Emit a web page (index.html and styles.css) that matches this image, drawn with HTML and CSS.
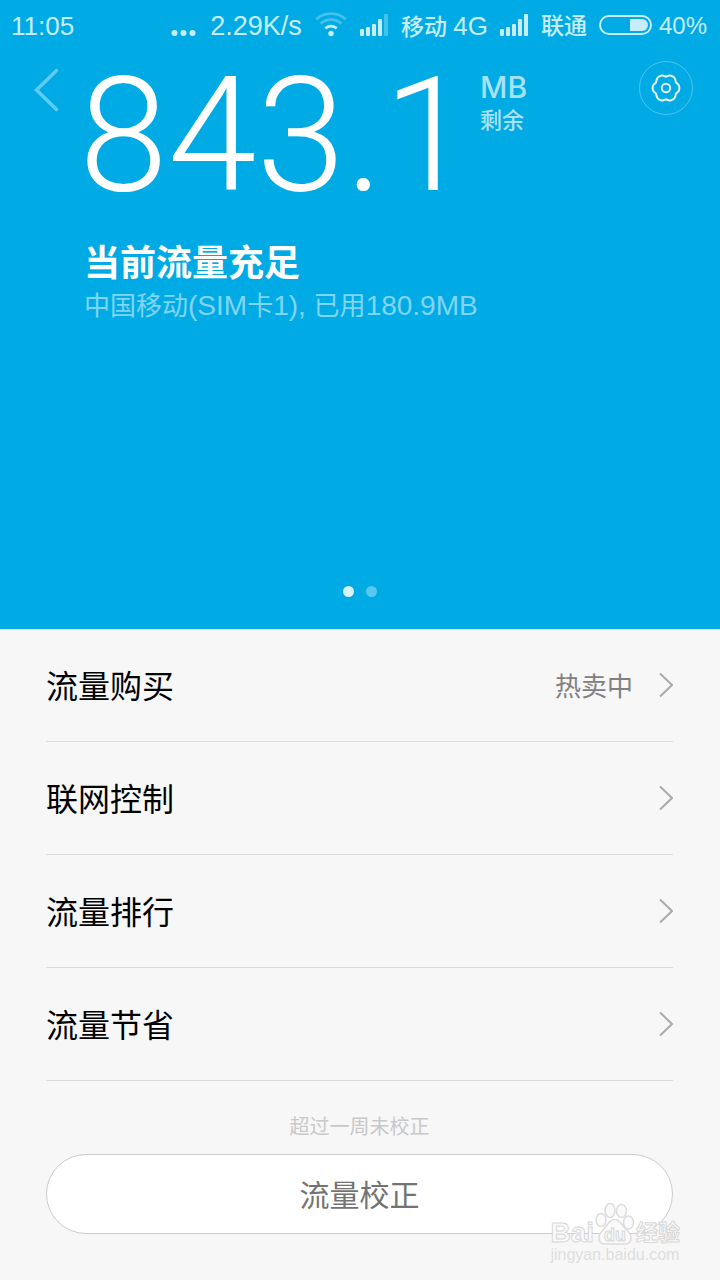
FILE: index.html
```
<!DOCTYPE html>
<html lang="zh-CN">
<head>
<meta charset="utf-8">
<meta name="viewport" content="width=device-width, initial-scale=1">
<title>流量</title>
<link rel="stylesheet" href="styles.css">
</head>
<body>
<section class="hero">
  <header class="status">
    <span class="clock">11:05</span>
    <svg class="more" width="26" height="28" viewBox="0 0 26 28"><circle cx="3.500" cy="21" r="3"/><circle cx="12.500" cy="21" r="3"/><circle cx="21.500" cy="21" r="3"/></svg>
    <span class="speed">2.29K/s</span>
    <svg class="wifi" width="32" height="28" viewBox="0 0 32 28">
      <circle cx="16" cy="21.500" r="2.700"/>
      <g fill="none" stroke="#c7edfa" stroke-width="2.800">
        <path d="M10.300 16.400a8.500 8.500 0 0 1 11.400 0"/>
        <path class="weak" d="M5.500 11.800a15.500 15.500 0 0 1 21 0"/>
        <path class="weak" d="M1.200 7.300a22 22 0 0 1 29.600 0"/>
      </g>
    </svg>
    <svg class="signal" width="28" height="28" viewBox="0 0 28 28"><rect x="0" y="17" width="4" height="7" rx="1"/><rect x="6" y="15" width="4" height="9" rx="1"/><rect x="12" y="12" width="4" height="12" rx="1"/><rect x="18" y="7" width="4" height="17" rx="1"/><rect class="weak" x="24" y="2" width="4" height="22" rx="1"/></svg>
    <span class="carrier">移动 <span class="net">4G</span></span>
    <svg class="signal" width="28" height="28" viewBox="0 0 28 28"><rect x="0" y="17" width="4" height="7" rx="1"/><rect x="6" y="15" width="4" height="9" rx="1"/><rect x="12" y="12" width="4" height="12" rx="1"/><rect x="18" y="7" width="4" height="17" rx="1"/><rect x="24" y="2" width="4" height="22" rx="1"/></svg>
    <span class="carrier">联通</span>
    <svg class="battery" width="54" height="28" viewBox="0 0 54 28"><rect x="1" y="4" width="51" height="18" rx="9" fill="none" stroke="#c7edfa" stroke-width="2"/><path d="M31 7h12a6 6 0 0 1 0 12h-12z"/></svg>
    <span class="percent">40%</span>
  </header>

  <div class="top">
    <button class="back" aria-label="返回"><svg width="26" height="44" viewBox="0 0 26 44"><path d="M22.500 2.500 2.500 22l20 19.500" fill="none" stroke="#60cbf0" stroke-width="3.500" stroke-linecap="round"/></svg></button>
    <h1 class="amount">843.1</h1>
    <div class="unit"><span class="mb">MB</span><span class="left">剩余</span></div>
    <button class="settings" aria-label="设置"><svg width="30" height="30" viewBox="-15 -15 30 30" fill="none" stroke="#e6f7fd" stroke-width="2" stroke-linecap="round">
      <defs><path id="lobe" d="M10-5.800Q10.600-4.800 11.800-4 13.400-2.800 13.400 0 13.400 2.800 11.800 4 10.600 4.800 10 5.800"/></defs>
      <use href="#lobe"/><use href="#lobe" transform="rotate(60)"/><use href="#lobe" transform="rotate(120)"/><use href="#lobe" transform="rotate(180)"/><use href="#lobe" transform="rotate(240)"/><use href="#lobe" transform="rotate(300)"/>
      <circle r="4.200"/></svg></button>
  </div>

  <h2 class="headline">当前流量充足</h2>
  <p class="detail">中国移动<span class="latin">(SIM</span>卡<span class="latin">1), </span>已用<span class="latin">180.9MB</span></p>

  <div class="dots"><span class="dot current"></span><span class="dot"></span></div>
</section>

<main class="content">
  <nav class="menu">
    <a class="row" href="#buy"><span class="name">流量购买</span><span class="note">热卖中</span><svg class="arrow" width="14" height="26" viewBox="0 0 14 26"><path d="m1 1.500 12 11.500L1 24.500"/></svg></a>
    <a class="row" href="#control"><span class="name">联网控制</span><svg class="arrow" width="14" height="26" viewBox="0 0 14 26"><path d="m1 1.500 12 11.500L1 24.500"/></svg></a>
    <a class="row" href="#rank"><span class="name">流量排行</span><svg class="arrow" width="14" height="26" viewBox="0 0 14 26"><path d="m1 1.500 12 11.500L1 24.500"/></svg></a>
    <a class="row" href="#save"><span class="name">流量节省</span><svg class="arrow" width="14" height="26" viewBox="0 0 14 26"><path d="m1 1.500 12 11.500L1 24.500"/></svg></a>
  </nav>
  <p class="hint">超过一周未校正</p>
  <button class="correct">流量校正</button>
  <div class="mark">
    <div class="brand">
      <span>Bai</span>
      <span class="paw"><svg width="42" height="44" viewBox="0 0 42 44"><g fill="#fafafa" stroke="#dcdcdc" stroke-width="1.500"><ellipse cx="7" cy="18" rx="5" ry="6.500"/><ellipse cx="16" cy="8.500" rx="5" ry="7"/><ellipse cx="27.500" cy="9" rx="5" ry="6.500"/><ellipse cx="34.500" cy="20.500" rx="5" ry="6.500"/><path d="M20.500 17.500c5 0 7 4.500 9.500 7.500s7 5.500 7 10.500c0 5-3 6.500-6 6.500H11c-4 0-6-2.500-6-6.500 0-4.500 4-7 6.500-10.500s4.500-7.500 9-7.500z"/></g></svg><span class="du">du</span></span>
      <span class="cn">经验</span>
    </div>
    <span class="site">jingyan.baidu.com</span>
  </div>
</main>
</body>
</html>
```
FILE: styles.css
```
* {
  box-sizing: border-box;
}

body {
  margin: 0;
  min-height: 100vh;
  background: #f7f7f7;
  color: #000;
  font-family: "Liberation Sans", "Noto Sans CJK SC", sans-serif;
}

h1, h2, p {
  margin: 0;
  font-weight: 400;
}

button {
  padding: 0;
  border: 0;
  background: none;
  font: inherit;
}

svg {
  display: block;
  flex: none;
}

.hero {
  display: flex;
  flex-direction: column;
  min-height: 629px;
  background: #00abe5;
  color: #fff;
}

/* Status bar */
.status {
  display: flex;
  align-items: center;
  height: 52px;
  padding: 0 13px 0 11px;
  color: #c7edfa;
  font-size: 27px;
  line-height: 28px;
  white-space: nowrap;
}

.status svg {
  fill: #c7edfa;
}

.weak {
  opacity: 0.35;
}

.clock {
  margin-right: auto;
  font-size: 26px;
}

.speed {
  margin: 0 13px;
}

.wifi {
  margin-right: 13px;
}

.carrier {
  margin: 0 12px 0 13px;
  font-size: 23px;
  font-weight: 500;
}

.net {
  font-size: 26px;
  font-weight: 400;
}

.battery {
  margin-right: 6px;
}

.percent {
  font-size: 24px;
}

/* Remaining data */
.top {
  display: flex;
  align-items: flex-start;
  height: 188px;
  padding: 0 27px 0 34px;
}

.back {
  width: 45px;
  margin-top: 16px;
}

.amount {
  flex: none;
  width: 401px;
  font-family: Roboto, "Liberation Sans", sans-serif;
  font-size: 160px;
  font-weight: 280;
  line-height: 168px;
}

.unit {
  display: flex;
  flex-direction: column;
  margin-top: 18px;
  color: #a8e2f6;
  font-weight: 500;
}

.mb {
  font-family: Inter, sans-serif;
  font-size: 30px;
  line-height: 34px;
}

.left {
  font-size: 22px;
  line-height: 34px;
}

.settings {
  display: grid;
  place-items: center;
  width: 54px;
  height: 54px;
  margin: 9px 0 0 auto;
  border: 1px solid #4dc4ed;
  border-radius: 50%;
}

.headline {
  padding: 0 84px;
  font-size: 36px;
  font-weight: 700;
  line-height: 48px;
}

.detail {
  padding: 0 84px;
  color: #80d5f2;
  font-size: 26px;
  line-height: 36px;
}

.latin {
  font-size: 28px;
}

.dots {
  display: flex;
  justify-content: center;
  gap: 12px;
  margin: auto 0 32px;
}

.dot {
  width: 11px;
  height: 11px;
  border-radius: 50%;
  background: #59c8ee;
}

.current {
  background: #d9f2fb;
}

/* Menu */
.content {
  position: relative;
  padding: 0 47px 46px 46px;
}

.row {
  display: flex;
  align-items: center;
  height: 113px;
  border-bottom: 1px solid #dcdcdc;
  color: #000;
  font-size: 32px;
  text-decoration: none;
}

.name,
.note {
  padding-bottom: 2px;
}

.note {
  margin-left: auto;
  margin-right: 26px;
  color: #808080;
  font-size: 26px;
}

.arrow {
  fill: none;
  stroke: #aaa;
  stroke-width: 2;
}

.name + .arrow {
  margin-left: auto;
}

.hint {
  padding-top: 31px;
  color: #c8c8c8;
  font-size: 20px;
  line-height: 30px;
  text-align: center;
}

.correct {
  display: block;
  width: 100%;
  height: 80px;
  margin-top: 12px;
  padding-bottom: 2px;
  border: 1px solid #ccc;
  border-radius: 40px;
  background: #fff;
  color: #737373;
  font-size: 30px;
}

/* Watermark over the button corner */
.mark {
  position: absolute;
  right: 40px;
  bottom: 16px;
  color: #fafafa;
  -webkit-text-stroke: 1px #d8d8d8;
}

.brand {
  display: flex;
  align-items: flex-end;
  font-size: 28px;
  font-weight: 700;
  line-height: 26px;
}

.paw {
  position: relative;
}

.du {
  position: absolute;
  left: 10px;
  bottom: 0;
  font-size: 18px;
  line-height: 22px;
}

.cn {
  font-size: 22px;
}

.site {
  display: block;
  color: #dedede;
  font-size: 16px;
  line-height: 18px;
  -webkit-text-stroke: 0;
}
```
